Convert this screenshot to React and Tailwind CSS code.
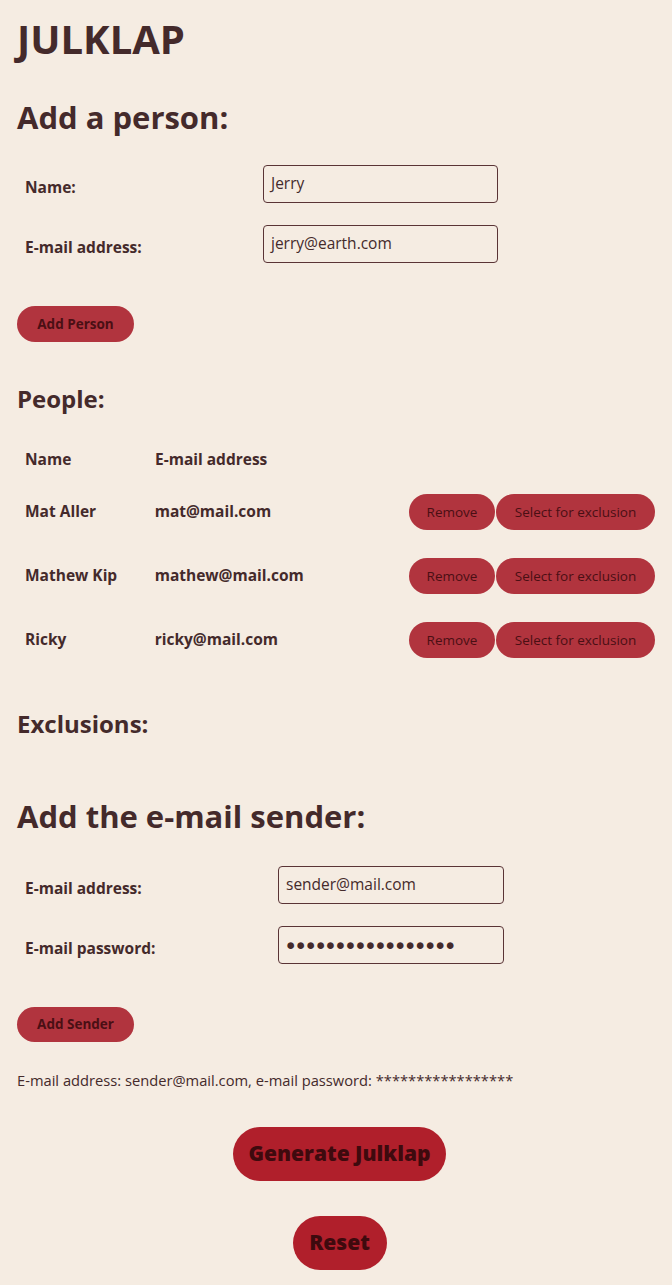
import React from "react";

const font = { fontFamily: '"Open Sans", "Noto Sans", sans-serif' };

function Field({ label, value, inputLeft, inputWidth, password }) {
  return (
    <div className="flex h-[60px] items-center">
      <div className="mt-[10px] pl-[8px] text-[15.5px] font-bold" style={{ width: inputLeft }}>
        {label}
      </div>
      <div
        className="mt-[1px] flex h-[38px] items-center rounded-[4px] border border-[#5a3436] px-[7px] text-[15.5px]"
        style={{ width: inputWidth }}
      >
        {password ? (
          <span className="text-[15.5px] tracking-[0.6px]">{"●".repeat(17)}</span>
        ) : (
          value
        )}
      </div>
    </div>
  );
}

function Pill({ children, className }) {
  return (
    <button className={"rounded-full bg-[#b1343e] text-[#4a0f14] " + className}>{children}</button>
  );
}

export default function App() {
  const people = [
    ["Mat Aller", "mat@mail.com"],
    ["Mathew Kip", "mathew@mail.com"],
    ["Ricky", "ricky@mail.com"],
  ];
  return (
    <div className="min-h-[1285px] bg-[#f5ece2] px-[17px] text-[#442a2b]" style={font}>
      <h1 className="pt-[14px] text-[40px] font-bold leading-[50px]">JULKLAP</h1>
      <h2 className="mt-[33px] text-[31px] font-bold leading-[40px]">Add a person:</h2>

      <div className="mt-[16px]">
        <Field label="Name:" value="Jerry" inputLeft={246} inputWidth={235} />
        <Field label="E-mail address:" value="jerry@earth.com" inputLeft={246} inputWidth={235} />
      </div>

      <Pill className="mt-[33px] h-[36px] w-[117px] text-[13.5px] font-bold">Add Person</Pill>

      <h3 className="mt-[42px] text-[24px] font-bold leading-[30px]">People:</h3>

      <div className="mt-[26px] text-[15.5px] font-bold">
        <div className="flex h-[40px] items-center">
          <div className="w-[138px] pl-[8px]">Name</div>
          <div>E-mail address</div>
        </div>
        {people.map(([n, e]) => (
          <div key={n} className="flex h-[64px] items-center">
            <div className="w-[138px] pl-[8px]">{n}</div>
            <div className="w-[255px]">{e}</div>
            <div className="flex">
              <Pill className="h-[36px] w-[86px] text-[13.5px] font-normal">Remove</Pill>
              <Pill className="ml-[1px] h-[36px] w-[159px] text-[13.5px] font-normal">
                Select for exclusion
              </Pill>
            </div>
          </div>
        ))}
      </div>

      <h3 className="mt-[37px] text-[24px] font-bold leading-[30px]">Exclusions:</h3>

      <h2 className="mt-[57px] text-[31px] font-bold leading-[40px]">Add the e-mail sender:</h2>

      <div className="mt-[18px]">
        <Field label="E-mail address:" value="sender@mail.com" inputLeft={261} inputWidth={226} />
        <Field label="E-mail password:" password inputLeft={261} inputWidth={226} />
      </div>

      <Pill className="mt-[33px] h-[35px] w-[117px] text-[13.5px] font-bold">Add Sender</Pill>

      <p className="mt-[26px] text-[14.7px] leading-[24px]">
        E-mail address: sender@mail.com, e-mail password: *****************
      </p>

      <div className="mt-[35px] flex flex-col items-center pl-[7px]">
        <button className="h-[54px] w-[213px] rounded-full bg-[#b01f2b] text-[21px] font-extrabold text-[#3e0a0e]">
          Generate Julklap
        </button>
        <button className="mt-[35px] h-[54px] w-[94px] rounded-full bg-[#b01f2b] text-[21px] font-extrabold text-[#3e0a0e]">
          Reset
        </button>
      </div>
    </div>
  );
}
